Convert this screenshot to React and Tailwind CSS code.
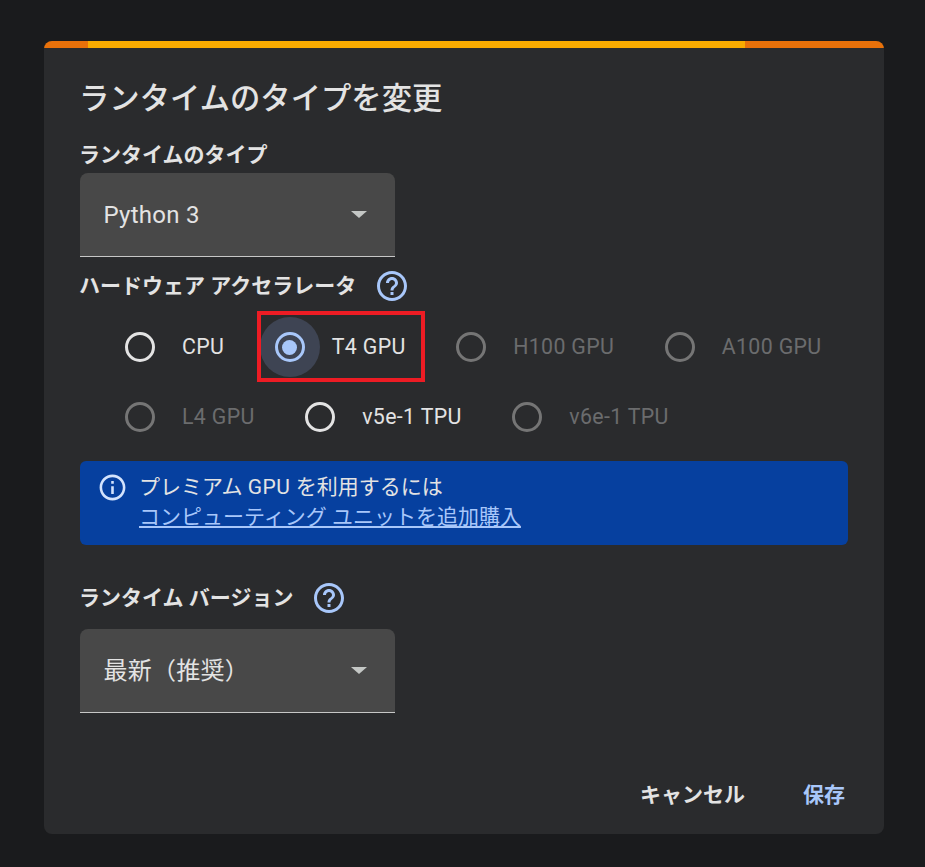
import React from "react";
import { MdHelpOutline, MdInfoOutline } from "react-icons/md";

const font = { fontFamily: '"Roboto", "Noto Sans CJK JP", sans-serif' };

function Radio({ label, checked, disabled, marked }) {
  const ring = checked
    ? "border-[#a8c7fa]"
    : disabled
    ? "border-[#757575]"
    : "border-[#e3e3e3]";
  return (
    <div className="relative flex items-center h-[60px]">
      <div className={`w-[60px] h-[60px] rounded-full flex items-center justify-center ${checked ? "bg-[#3e4453]" : ""}`}>
        <div className={`w-[30px] h-[30px] rounded-full border-[3px] flex items-center justify-center ${ring}`}>
          {checked && <div className="w-[15px] h-[15px] rounded-full bg-[#a8c7fa]" />}
        </div>
      </div>
      <span className={`ml-[12px] text-[21.33px] tracking-[0.35px] leading-[28px] whitespace-nowrap ${disabled ? "text-[#6b6c6d]" : "text-[#e3e3e3]"}`}>
        {label}
      </span>
      {marked && (
        <div className="absolute left-[-3px] top-[-6px] w-[168px] h-[71px] border-[4px] border-[#ed1c24]" />
      )}
    </div>
  );
}

function Select({ value }) {
  return (
    <div className="w-[315px] h-[84px] bg-[#484848] rounded-t-[8px] border-b border-[#c7c7c7] flex items-center justify-between pl-[23.5px] pr-[28px]">
      <span className="text-[24px] tracking-[0.25px] leading-[32px] text-[#e3e3e3]">{value}</span>
      <div className="w-0 h-0 border-l-[8px] border-r-[8px] border-t-[7px] border-l-transparent border-r-transparent border-t-[#c4c7c5]" />
    </div>
  );
}

export default function App() {
  return (
    <div className="w-[925px] h-[867px] bg-[#1a1b1d] pt-[41px] pl-[44px] overflow-hidden" style={font}>
      <div className="w-[840px] h-[793px] bg-[#2a2b2d] rounded-[8px] overflow-hidden flex flex-col">
        <div className="flex h-[7px] shrink-0">
          <div className="w-[44px] bg-[#e8710a]" />
          <div className="w-[657px] bg-[#f9ab00]" />
          <div className="flex-1 bg-[#e8710a]" />
        </div>
        <div className="flex-1 flex flex-col px-[36px]">
          <h1 className="mt-[30px] -ml-[1px] text-[30.33px] leading-[42px] text-[#e3e3e3] font-medium">ランタイムのタイプを変更</h1>
          <div className="mt-[21px] -ml-[1px] text-[21px] leading-[28px] font-bold text-[#e3e3e3]">ランタイムのタイプ</div>
          <div className="mt-[4px]"><Select value="Python 3" /></div>

          <div className="mt-[13px] flex items-center h-[32px] -ml-[1px]">
            <span className="text-[21px] leading-[28px] font-bold text-[#e3e3e3]">ハードウェア アクセラレータ</span>
            <MdHelpOutline className="ml-[18px] text-[#a8c7fa]" size={36} />
          </div>
          <div className="mt-[15px] pl-[30px] flex flex-wrap gap-x-[35.5px] gap-y-[10px]">
            <Radio label="CPU" />
            <Radio label="T4 GPU" checked marked />
            <Radio label="H100 GPU" disabled />
            <Radio label="A100 GPU" disabled />
            <Radio label="L4 GPU" disabled />
            <Radio label="v5e-1 TPU" />
            <Radio label="v6e-1 TPU" disabled />
          </div>

          <div className="mt-[14px] h-[84px] bg-[#06409f] rounded-[6px] flex pl-[17px] pt-[11px]">
            <MdInfoOutline className="text-[#d3e3fd] shrink-0" size={31} />
            <div className="ml-[12px] -translate-x-px text-[21px] leading-[30px] text-[#e3e3e3]">
              <div>プレミアム <span className="tracking-[0.5px]">GPU</span> を利用するには</div>
              <a className="text-[#a8c7fa] underline">コンピューティング ユニットを追加購入</a>
            </div>
          </div>

          <div className="mt-[37px] flex items-center h-[32px] -ml-[1px]">
            <span className="text-[21px] leading-[28px] font-bold text-[#e3e3e3]">ランタイム バージョン</span>
            <MdHelpOutline className="ml-[18px] text-[#a8c7fa]" size={36} />
          </div>
          <div className="mt-[15px]"><Select value="最新（推奨）" /></div>

          <div className="mt-[68px] flex justify-end items-center">
            <span className="text-[21px] leading-[28px] font-bold text-[#e3e3e3]">キャンセル</span>
            <span className="ml-[58px] text-[21px] leading-[28px] font-bold text-[#a8c7fa] mr-[3px]">保存</span>
          </div>
        </div>
      </div>
    </div>
  );
}
